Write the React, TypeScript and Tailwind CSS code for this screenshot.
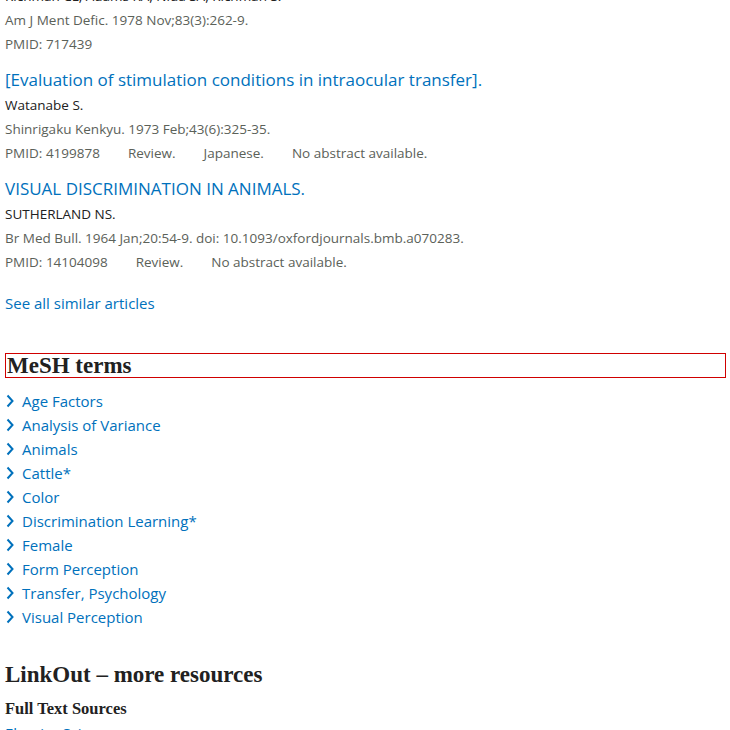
import React from 'react';

const sans = { fontFamily: '"Open Sans", "Noto Sans", sans-serif' };
const serif = { fontFamily: '"Liberation Serif", "DejaVu Serif", serif' };

const articles = [
  {
    title: '',
    authors: 'Richman CL, Adams KA, Nida SA, Richman S.',
    citation: 'Am J Ment Defic. 1978 Nov;83(3):262-9.',
    tags: ['PMID: 717439'],
  },
  {
    title: '[Evaluation of stimulation conditions in intraocular transfer].',
    authors: 'Watanabe S.',
    citation: 'Shinrigaku Kenkyu. 1973 Feb;43(6):325-35.',
    tags: ['PMID: 4199878', 'Review.', 'Japanese.', 'No abstract available.'],
  },
  {
    title: 'VISUAL DISCRIMINATION IN ANIMALS.',
    authors: 'SUTHERLAND NS.',
    citation: 'Br Med Bull. 1964 Jan;20:54-9. doi: 10.1093/oxfordjournals.bmb.a070283.',
    tags: ['PMID: 14104098', 'Review.', 'No abstract available.'],
  },
];

const meshTerms = [
  'Age Factors',
  'Analysis of Variance',
  'Animals',
  'Cattle*',
  'Color',
  'Discrimination Learning*',
  'Female',
  'Form Perception',
  'Transfer, Psychology',
  'Visual Perception',
];

const Chevron = () => (
  <svg width="10" height="14" viewBox="0 0 10 14" className="shrink-0">
    <path d="M2.5 1.5 L7.5 7 L2.5 12.5" fill="none" stroke="#0071bc" strokeWidth="2" />
  </svg>
);

const App: React.FC = () => {
  return (
    <div className="bg-white min-h-screen pl-[5px] pr-[4px] overflow-hidden" style={sans}>
      <div className="-mt-[16px]">
        {articles.map((a, i) => (
          <div key={i} className={i === 0 ? '' : 'mt-[11px]'}>
            {a.title && (
              <a className="block text-[17px] leading-[26px] text-[#0071bc]">{a.title}</a>
            )}
            <div className="text-[13.5px] leading-[24px] text-[#212121]">{a.authors}</div>
            <div className="text-[13.5px] leading-[24px] text-[#5b6159]">{a.citation}</div>
            <div className="flex gap-[28px] text-[13.5px] leading-[24px] text-[#5b6159]">
              {a.tags.map(t => (
                <span key={t}>{t}</span>
              ))}
            </div>
          </div>
        ))}
        <a className="block mt-[17px] text-[15px] leading-[24px] text-[#0071bc]">See all similar articles</a>
      </div>

      <h2
        className="mt-[38px] border border-[#d00000] text-[23px] leading-[23px] font-bold text-[#212121] pl-px"
        style={serif}
      >
        MeSH terms
      </h2>
      <ul className="mt-[11px]">
        {meshTerms.map(t => (
          <li key={t} className="flex items-center gap-[7px] text-[15px] leading-[24px] text-[#0071bc]">
            <Chevron />
            <a>{t}</a>
          </li>
        ))}
      </ul>

      <h2 className="mt-[32px] text-[23px] leading-[28px] font-bold text-[#212121]" style={serif}>
        LinkOut – more resources
      </h2>
      <h3 className="mt-[8px] text-[16.5px] leading-[24px] font-bold text-[#212121]" style={serif}>
        Full Text Sources
      </h3>
      <a className="block text-[15px] leading-[24px] text-[#0071bc]">Elsevier Science</a>
    </div>
  );
};

export default App;
